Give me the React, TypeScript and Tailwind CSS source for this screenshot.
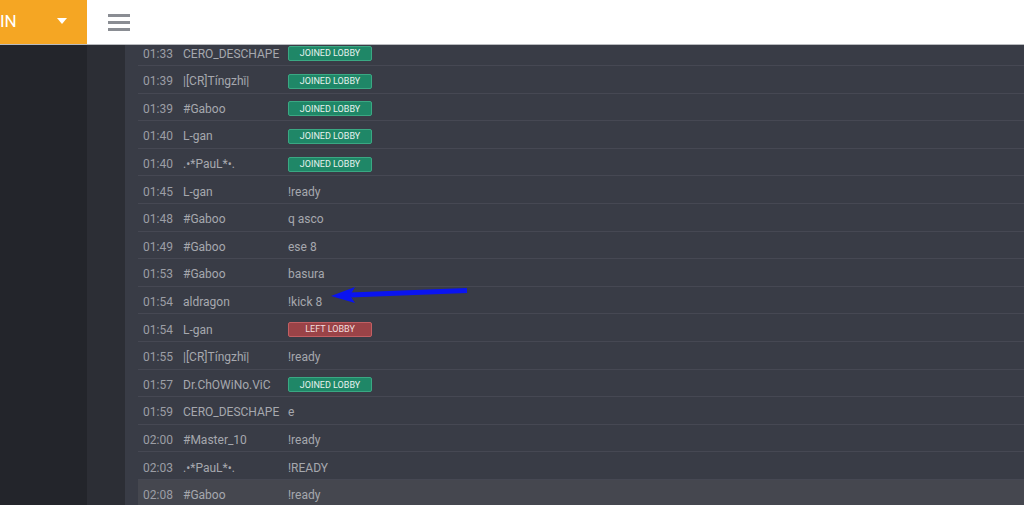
import React from 'react';

type Row = { time: string; name: string; msg?: string; event?: 'join' | 'left' };

const rows: Row[] = [
  { time: '01:33', name: 'CERO_DESCHAPE', event: 'join' },
  { time: '01:39', name: '|[CR]Tíngzhǐ|', event: 'join' },
  { time: '01:39', name: '#Gaboo', event: 'join' },
  { time: '01:40', name: 'L-gan', event: 'join' },
  { time: '01:40', name: '.•*PauL*•.', event: 'join' },
  { time: '01:45', name: 'L-gan', msg: '!ready' },
  { time: '01:48', name: '#Gaboo', msg: 'q asco' },
  { time: '01:49', name: '#Gaboo', msg: 'ese 8' },
  { time: '01:53', name: '#Gaboo', msg: 'basura' },
  { time: '01:54', name: 'aldragon', msg: '!kick 8' },
  { time: '01:54', name: 'L-gan', event: 'left' },
  { time: '01:55', name: '|[CR]Tíngzhǐ|', msg: '!ready' },
  { time: '01:57', name: 'Dr.ChOWiNo.ViC', event: 'join' },
  { time: '01:59', name: 'CERO_DESCHAPE', msg: 'e' },
  { time: '02:00', name: '#Master_10', msg: '!ready' },
  { time: '02:03', name: '.•*PauL*•.', msg: '!READY' },
  { time: '02:08', name: '#Gaboo', msg: '!ready' },
];

const Badge = ({ kind }: { kind: 'join' | 'left' }) =>
  kind === 'join' ? (
    <span className="flex h-[15px] w-[84px] items-center justify-center rounded-[2px] border border-[#3aa883] bg-[#1f8767] pt-px text-[9px] uppercase text-[#e6f2ee]">
      Joined Lobby
    </span>
  ) : (
    <span className="flex h-[15px] w-[84px] items-center justify-center rounded-[2px] border border-[#c25f63] bg-[#9a4347] pt-px text-[9px] uppercase text-[#f0dede]">
      Left Lobby
    </span>
  );

const App = () => {
  return (
    <div className="relative h-[505px] w-[1024px] overflow-hidden bg-[#393c46] font-['Roboto',sans-serif]">
      <header className="relative z-10 flex h-[45px] border-b border-[#b9bbbf] bg-white">
        <div className="flex w-[87px] items-center justify-between bg-[#f5a623] pr-[20px]">
          <span className="text-[17px] text-white">IN</span>
          <svg width="10" height="6" viewBox="0 0 10 6" className="mb-[2px]">
            <path d="M0 0h10L5 6z" fill="#fff" />
          </svg>
        </div>
        <div className="flex items-center pl-[21px]">
          <div className="flex flex-col gap-[4px]">
            <span className="h-[3px] w-[22px] bg-[#8a8d93]" />
            <span className="h-[3px] w-[22px] bg-[#8a8d93]" />
            <span className="h-[3px] w-[22px] bg-[#8a8d93]" />
          </div>
        </div>
      </header>

      <div className="flex h-[460px]">
        <aside className="w-[87px] bg-[#23252b]" />
        <div className="w-[38px] bg-[#2c2e35]" />
        <main className="flex-1 overflow-hidden pl-[13px]">
          <div className="-mt-[6.6px]">
            {rows.map((r, i) => (
              <div
                key={i}
                className={`flex h-[27.6px] items-center border-b border-[#464853] pt-[4px] text-[12px] ${
                  i === rows.length - 1 ? 'bg-[#45474f]' : ''
                }`}
              >
                <span className="w-[45px] pl-[5px] text-[#9c9ea5]">{r.time}</span>
                <span className="w-[105px] whitespace-nowrap text-[#a6a8ae]">{r.name}</span>
                {r.event ? <Badge kind={r.event} /> : <span className="text-[#a6a8ae]">{r.msg}</span>}
              </div>
            ))}
          </div>
        </main>
      </div>

      <svg className="absolute left-[330px] top-[284px]" width="142" height="22" viewBox="0 0 142 22">
        <path d="M137 6.5 L20 11" stroke="#0a14f0" strokeWidth="5" fill="none" />
        <path d="M1 12 L25 3 L20 11.5 L25 19 Z" fill="#0a14f0" />
      </svg>
    </div>
  );
};

export default App;
